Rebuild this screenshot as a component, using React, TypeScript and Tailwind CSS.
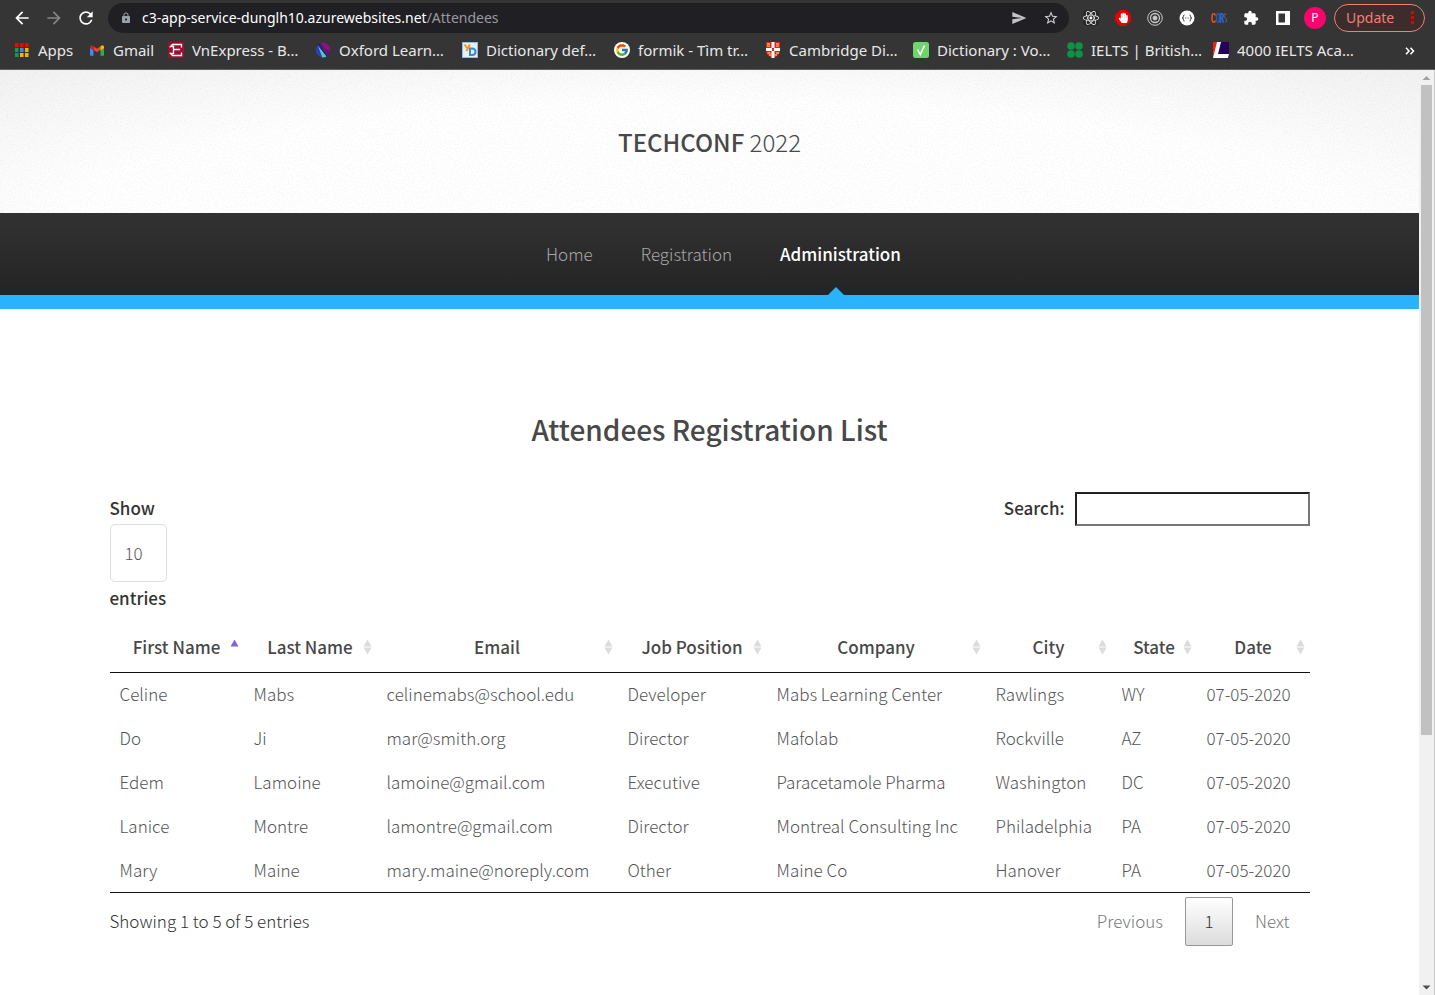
import type { ReactNode } from "react";
import { FaReact, FaHandPaper } from "react-icons/fa";
import { FcGoogle } from "react-icons/fc";
import { MdArrowBack, MdArrowForward, MdRefresh, MdLock, MdSend, MdStarBorder, MdExtension } from "react-icons/md";

type Bookmark = { label: string; width: string; icon: ReactNode };

const AppsIcon = () => (
  <svg viewBox="0 0 14 14" className="size-3.5">
    {["#f00", "#00a651", "#00a651"].map((c, i) => <rect key={i} x="0" y={i * 5} width="3.500" height="4" fill={c} />)}
    {["#f00", "#4285f4", "#f9b200"].map((c, i) => <rect key={i} x="5" y={i * 5} width="3.500" height="4" fill={c} />)}
    {["#f00", "#f9b200", "#f9b200"].map((c, i) => <rect key={i} x="10" y={i * 5} width="3.500" height="4" fill={c} />)}
  </svg>
);

const GmailIcon = () => (
  <svg viewBox="0 0 16 12" className="h-[11px] w-3.5">
    <path d="M1 12h3V5L0 2v9q0 1 1 1z" fill="#4285f4" />
    <path d="M12 12h3q1 0 1-1V2l-4 3z" fill="#34a853" />
    <path d="M4 5V1l4 3 4-3v4L8 8z" fill="#ea4335" />
    <path d="M0 2Q0 0 2 0l2 1v5L0 3z" fill="#c5221f" />
    <path d="M16 2q0-2-2-2l-2 1v5l4-3z" fill="#fbbc04" />
  </svg>
);

const VnIcon = () => (
  <svg viewBox="0 0 16 16" className="size-4">
    <rect width="16" height="16" rx="1" fill="#9f0f2c" />
    <path d="M13.500 5.500V2.500H4.500L2.500 4.500H5.500V7.500H12M13.500 10.500V13.500H4.500L2.500 11.500H5.500V8" fill="none" stroke="#fff" strokeWidth="1.300" />
  </svg>
);

const OxfordIcon = () => (
  <svg viewBox="0 0 16 16" className="size-4">
    <circle cx="8" cy="8" r="7.500" fill="#24246a" />
    <path d="M5 1.100A7.500 7.500 0 0 1 15.300 9.500L10 7z" fill="#8a1478" />
    <path d="M4 2L10 7l5.300 2.500A7.500 7.500 0 0 1 12.500 14z" fill="#5a1a70" />
    <path d="M2.500 3L11.500 14.600A7.500 7.500 0 0 1 7 15.400z" fill="#56c0cc" />
    <path d="M.6 7L2.500 3 7 15.400A7.500 7.500 0 0 1 .6 7z" fill="#3040a8" />
  </svg>
);

const YdIcon = () => (
  <svg viewBox="0 0 16 16" className="size-4">
    <rect x=".5" y=".5" width="15" height="15" fill="#e4f1fc" stroke="#8dbce6" />
    <path d="M2.500 2.500L5 6M7.800 2.500L4.500 9" stroke="#f59a00" strokeWidth="2" />
    <path d="M8 6.500V13h2q3.500 0 3.500-3.200T10 6.500z" fill="none" stroke="#3b86d8" strokeWidth="2" />
  </svg>
);

const GoogleIcon = () => (
  <span className="flex size-4 items-center justify-center rounded-full bg-white">
    <FcGoogle className="size-3.5" />
  </span>
);

const CambridgeIcon = () => (
  <svg viewBox="0 0 14 16" className="h-4 w-3.5">
    <path d="M0 0h14v9q0 5-7 7-7-2-7-7z" fill="#d8222a" />
    <path d="M5.500 0h3v16h-3zM0 6h14v3H0z" fill="#fff" />
    <path d="M1 2h3M10 2h3M1 4.200h3M10 4.200h3M1.500 11h3M10 11h3M3 13h2M9 13h2" stroke="#f5b83d" strokeWidth="1.300" />
    <rect x="6" y="6" width="2" height="3" fill="#d8222a" />
  </svg>
);

const VocabIcon = () => (
  <svg viewBox="0 0 16 16" className="size-4">
    <rect width="16" height="16" rx="2.500" fill="#6fd56c" />
    <path d="M4.500 7.500l2.800 5L11.500 3.500" fill="none" stroke="#fff" strokeWidth="1.500" />
  </svg>
);

const CouncilIcon = () => (
  <svg viewBox="0 0 16 16" className="size-4" fill="#0f9246">
    <circle cx="4" cy="4" r="3.800" />
    <circle cx="12" cy="4" r="3.800" />
    <circle cx="4" cy="12" r="3.800" />
    <circle cx="12" cy="12" r="3.800" />
  </svg>
);

const LIcon = () => (
  <svg viewBox="0 0 16 16" className="size-4">
    <rect width="16" height="16" fill="#24005c" />
    <path d="M0 0h5L1 16H0z" fill="#f31b12" />
    <path d="M4 0h4L5 12h11l-1 4H0z" fill="#fff" />
  </svg>
);

const bookmarks: Bookmark[] = [
  { label: "Apps", width: "w-[75px]", icon: <AppsIcon /> },
  { label: "Gmail", width: "w-[79px]", icon: <GmailIcon /> },
  { label: "VnExpress - B…", width: "w-[147px]", icon: <VnIcon /> },
  { label: "Oxford Learn…", width: "w-[147px]", icon: <OxfordIcon /> },
  { label: "Dictionary def…", width: "w-[152px]", icon: <YdIcon /> },
  { label: "formik - Tìm tr…", width: "w-[151px]", icon: <GoogleIcon /> },
  { label: "Cambridge Di…", width: "w-[148px]", icon: <CambridgeIcon /> },
  { label: "Dictionary : Vo…", width: "w-[154px]", icon: <VocabIcon /> },
  { label: "IELTS | British…", width: "w-[146px]", icon: <CouncilIcon /> },
  { label: "4000 IELTS Aca…", width: "w-[140px]", icon: <LIcon /> },
];

const Browser = () => (
  <div className="border-b border-[#5f5f5f] bg-[#353535] font-['Noto_Sans',sans-serif] text-sm text-[#e8e8e8]">
    <div className="flex h-9 items-center pr-2.5 pl-3">
      <div className="flex gap-3 text-white">
        <button aria-label="Back"><MdArrowBack className="size-5" /></button>
        <button aria-label="Forward" className="text-[#858585]"><MdArrowForward className="size-5" /></button>
        <button aria-label="Reload"><MdRefresh className="size-5" /></button>
      </div>
      <div className="ml-3 flex h-[30px] flex-1 items-center rounded-full bg-[#202024] pr-2.5 pl-3">
        <MdLock className="mr-2.5 size-3 text-[#9aa0a6]" />
        <span className="flex-1 text-white">
          c3-app-service-dunglh10.azurewebsites.net<span className="text-[#9a9a9e]">/Attendees</span>
        </span>
        <button aria-label="Share" className="mr-4 text-[#c4c4c4]"><MdSend className="size-4" /></button>
        <button aria-label="Bookmark this page" className="text-[#d0d0d0]"><MdStarBorder className="size-4" /></button>
      </div>
      <div className="ml-3.5 flex items-center gap-4 text-white">
        <button aria-label="React tools" className="rounded-sm bg-[#2a2a2a]"><FaReact className="size-4" /></button>
        <button aria-label="Blocker">
          <svg viewBox="0 0 16 16" className="size-4">
            <path d="M5 0h6l5 5v6l-5 5H5l-5-5V5z" fill="#e60000" />
            <FaHandPaper x="3" y="2.500" size="10.500" />
          </svg>
        </button>
        <button aria-label="Recorder">
          <svg viewBox="0 0 16 16" className="size-4" fill="none" stroke="#c8c8c8">
            <circle cx="8" cy="8" r="7.300" />
            <circle cx="8" cy="8" r="4.500" strokeWidth="1.300" />
            <circle cx="8" cy="8" r="2" fill="#c8c8c8" />
          </svg>
        </button>
        <button aria-label="JSON viewer">
          <svg viewBox="0 0 16 16" className="size-4">
            <circle cx="8" cy="8" r="7.500" fill="#fff" />
            <path d="M5.500 5q-1.300 0-1.100 1.500T3.200 8q1.300 0 1.200 1.500T5.500 11M10.500 5q1.300 0 1.100 1.500T12.800 8q-1.300 0-1.200 1.500T10.500 11M6.300 8h1M8.700 8h1" fill="none" stroke="#333" />
          </svg>
        </button>
        <button aria-label="CORS">
          <svg viewBox="0 0 16 16" className="size-4" fill="none" strokeWidth="1.600">
            <path d="M4.500 5.500Q4 3.800 2.600 3.800 1 3.800 1 8t1.600 4.200q1.400 0 1.900-1.700" stroke="#f04e14" />
            <ellipse cx="7" cy="8" rx="1.500" ry="4.200" stroke="#285a9c" />
            <path d="M9.500 13V3.800h1.300q1.400 0 1.400 2t-1.400 2H9.500m1.500 0l1.500 5" stroke="#2c5ee0" />
            <path d="M15.300 5q-.5-1.200-1.200-1.200-1 0-1 1.800T14.500 8q1 .5 1 2.200t-1.300 2" stroke="#5b5b5b" strokeWidth="1.200" />
          </svg>
        </button>
        <button aria-label="Extensions"><MdExtension className="size-4" /></button>
        <button aria-label="Side panel">
          <svg viewBox="0 0 16 16" className="size-4">
            <path d="M1 1h14v14H1zM3.500 3.500v9H10v-9z" fill="#fff" fillRule="evenodd" />
          </svg>
        </button>
      </div>
      <button aria-label="Profile" className="ml-[13px] size-[22px] rounded-full bg-[#f8046c] text-xs text-white">P</button>
      <button className="ml-2 flex h-7 w-[91px] items-center justify-between rounded-full border border-[#f07f74] bg-[#3d2c2c] pr-2.5 pl-[11px] text-[#f07f74]">
        Update
        <svg viewBox="0 0 3 14" className="h-3.5 w-[3px]" fill="#e60000">
          <rect width="3" height="3" />
          <rect y="5" width="3" height="3" />
          <rect y="10" width="3" height="3" />
        </svg>
      </button>
    </div>
    <nav aria-label="Bookmarks" className="flex h-[33px] items-center pb-1 pl-3.5 text-[15px]">
      {bookmarks.map((b) => (
        <a key={b.label} href="#" className={`flex shrink-0 items-center gap-2 whitespace-nowrap ${b.width}`}>
          <span className="flex w-4 justify-center">{b.icon}</span>
          {b.label}
        </a>
      ))}
      <button aria-label="More bookmarks" className="mr-5 ml-auto">
        <svg viewBox="0 0 10 8" className="h-2 w-2.5" fill="none" stroke="#fff" strokeWidth="1.600">
          <path d="M1 .8L4 4 1 7.200M5.500 .8l3 3.200-3 3.200" />
        </svg>
      </button>
    </nav>
  </div>
);

const Grain = () => (
  <svg aria-hidden="true" className="pointer-events-none absolute inset-0 size-full opacity-[0.07]">
    <filter id="grain">
      <feTurbulence type="fractalNoise" baseFrequency="0.7" numOctaves="2" />
      <feColorMatrix values="0 0 0 0 0.3  0 0 0 0 0.3  0 0 0 0 0.3  3 0 0 0 -1.3" />
    </filter>
    <rect width="100%" height="100%" filter="url(#grain)" />
  </svg>
);

const SortIcon = ({ active }: { active: boolean }) => (
  <svg viewBox="0 0 9 15" className="absolute top-1/2 right-[5px] h-[15px] w-[9px] -translate-y-1/2">
    <path d="M4.500 0L8.500 7h-8z" fill={active ? "#8560e0" : "#dcdcdc"} />
    {!active && <path d="M.5 8h8l-4 7z" fill="#dcdcdc" />}
  </svg>
);

const columns = [
  { label: "First Name", width: "w-[134px]" },
  { label: "Last Name", width: "w-[133px]" },
  { label: "Email", width: "w-[241px]" },
  { label: "Job Position", width: "w-[149px]" },
  { label: "Company", width: "w-[219px]" },
  { label: "City", width: "w-[126px]" },
  { label: "State", width: "w-[85px]" },
  { label: "Date", width: "w-[113px]" },
];

const rows = [
  ["Celine", "Mabs", "celinemabs@school.edu", "Developer", "Mabs Learning Center", "Rawlings", "WY", "07-05-2020"],
  ["Do", "Ji", "mar@smith.org", "Director", "Mafolab", "Rockville", "AZ", "07-05-2020"],
  ["Edem", "Lamoine", "lamoine@gmail.com", "Executive", "Paracetamole Pharma", "Washington", "DC", "07-05-2020"],
  ["Lanice", "Montre", "lamontre@gmail.com", "Director", "Montreal Consulting Inc", "Philadelphia", "PA", "07-05-2020"],
  ["Mary", "Maine", "mary.maine@noreply.com", "Other", "Maine Co", "Hanover", "PA", "07-05-2020"],
];

const Site = () => (
  <div className="min-w-0 flex-1 bg-white font-['Noto_Sans_CJK_SC',sans-serif] text-[17px] leading-6 font-light text-[#484848]">
    <header className="relative flex h-[143px] items-center justify-center bg-[radial-gradient(ellipse_75%_130%_at_50%_100%,#ffffff_60%,#e8e8e8_130%)]">
      <Grain />
      <h1 className="relative text-2xl text-[#484848]">
        <span className="font-medium">TECHCONF</span> 2022
      </h1>
    </header>
    <nav aria-label="Main" className="flex h-24 items-stretch justify-center gap-12 border-b-[14px] border-[#2ab3ff] bg-linear-to-b from-[#323232] to-[#242424] pl-7 text-[#a8a8a8]">
      <a href="#" className="flex items-center">Home</a>
      <a href="#" className="flex items-center">Registration</a>
      <a href="#" aria-current="page" className="relative flex items-center font-medium text-white">
        Administration
        <svg viewBox="0 0 16 8" className="absolute bottom-0 left-1/2 h-2 w-4 -translate-x-3" fill="#2ab3ff">
          <path d="M8 0l8 8H0z" />
        </svg>
      </a>
    </nav>
    <main className="mx-auto max-w-[1200px] pt-24">
      <h2 className="text-center text-[28px] leading-12 font-medium">Attendees Registration List</h2>
      <div className="mt-[39px] flex items-start justify-between font-medium text-[#333]">
        <label className="flex flex-col items-start gap-1 pt-1">
          <span>Show</span>
          <select className="h-[58px] w-[57px] appearance-none rounded-[5px] border border-[#dedede] pl-3.5 font-light text-[#555]">
            <option>10</option>
          </select>
          <span>entries</span>
        </label>
        <label className="flex items-start gap-2.5 leading-8">
          Search:
          <input type="search" className="h-[34px] w-[235px] border-2 border-t-[#222] border-r-[#777] border-b-[#777] border-l-[#222] px-1" />
        </label>
      </div>
      <table className="mt-3 w-full table-fixed border-b border-[#111]">
        <thead>
          <tr className="h-[50px] border-b border-[#111]">
            {columns.map((c, i) => (
              <th key={c.label} scope="col" aria-sort={i === 0 ? "ascending" : "none"} className={`relative text-center font-medium whitespace-nowrap ${c.width}`}>
                {c.label}
                <SortIcon active={i === 0} />
              </th>
            ))}
          </tr>
        </thead>
        <tbody className="text-[#555]">
          {rows.map((r) => (
            <tr key={r[0]} className="h-11">
              {r.map((cell, i) => <td key={i} className="px-2.5 whitespace-nowrap">{cell}</td>)}
            </tr>
          ))}
        </tbody>
      </table>
      <div className="flex items-start justify-between pt-1">
        <p className="pt-3 text-[#333]">Showing 1 to 5 of 5 entries</p>
        <div className="flex gap-0.5 text-[#777]">
          <button className="h-[49px] px-5">Previous</button>
          <button aria-current="page" className="h-[49px] w-12 rounded-xs border border-[#979797] bg-linear-to-b from-white to-[#dcdcdc] text-[#333]">1</button>
          <button className="h-[49px] px-5">Next</button>
        </div>
      </div>
    </main>
  </div>
);

const Scrollbar = () => (
  <div aria-hidden="true" className="flex w-4 shrink-0 flex-col items-center border-r border-[#c9c9c9] bg-[#f1f1f1]">
    <svg viewBox="0 0 15 15" className="size-[15px]" fill="#a3a3a3"><path d="M7.500 6l4 4h-8z" /></svg>
    <div className="w-[11px] grow-[650] bg-[#c1c1c1]" />
    <div className="grow-[245]" />
    <svg viewBox="0 0 15 15" className="size-[15px]" fill="#505050"><path d="M7.500 9.500l-4-4h8z" /></svg>
  </div>
);

export default function App() {
  return (
    <div className="flex min-h-screen flex-col">
      <Browser />
      <div className="flex flex-1">
        <Site />
        <Scrollbar />
      </div>
    </div>
  );
}
